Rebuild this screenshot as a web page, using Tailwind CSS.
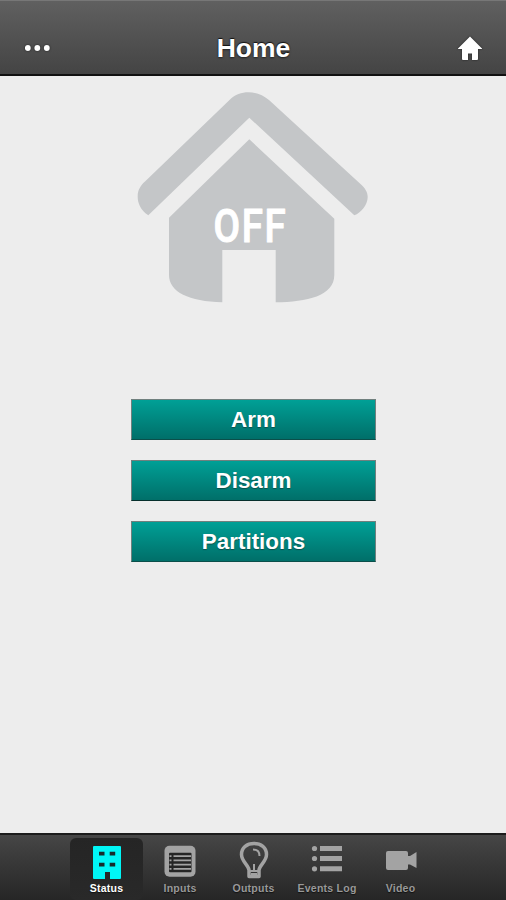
<!DOCTYPE html>
<html lang="en">
<head>
  <meta charset="UTF-8" />
  <meta name="viewport" content="width=device-width, initial-scale=1" />
  <title>Home</title>
  <script src="https://cdn.jsdelivr.net/npm/@tailwindcss/browser@4"></script>
</head>
<body class="h-screen flex flex-col overflow-hidden bg-[#ededed] font-['Liberation_Sans',Arial,sans-serif]">
  <!-- Top bar -->
  <header class="h-[76px] shrink-0 flex items-center justify-between pt-5 pl-[25px] pr-6 border-t border-t-[#777] border-b-2 border-b-[#111] bg-linear-to-b from-[#606060] to-[#444]">
    <button aria-label="Menu" class="w-[50px]">
      <svg class="w-[26px] h-[8px] drop-shadow-[0_0_1px_#222]" viewBox="0 0 26 8" fill="#fff">
        <circle cx="2.8" cy="4" r="2.9" /><circle cx="12.3" cy="4" r="2.9" /><circle cx="21.8" cy="4" r="2.9" />
      </svg>
    </button>
    <h1 class="pt-[2px] text-[26.5px] leading-none font-bold text-white [text-shadow:0_-1px_1px_#111,0_1px_2px_#222]">Home</h1>
    <button aria-label="Home" class="w-[50px] flex justify-end">
      <svg class="w-[24px] h-[24px] drop-shadow-[0_0_1px_#222]" viewBox="0 0 24 24" fill="#fff">
        <path d="M12 0.5L24 12.5V13H20V23Q20 24 19 24H14V17.5H10V24H5Q4 24 4 23V13H0V12.5Z" />
      </svg>
    </button>
  </header>

  <main class="flex-1 flex flex-col items-center">
    <!-- Alarm state -->
    <svg class="mt-4 mr-[2px] w-[231px] h-[211px] shrink-0" viewBox="0 0 231 211" fill="#c4c6c8">
      <path d="M11.3 123.3C3 118 .5 110 .7 104.5C.5 98 4 93 8 89.5L93 7.5C103 -2.3 120 -2.3 132 8L223.5 92C228 96 230.7 100 230.7 105C230.5 113 224 121 217.3 123.3L112.3 25.7Z" />
      <path d="M112.3 47.3L197.3 126.7V183C197.3 204 170 210 138.7 210.3V158H85.3V210.3C52 209.5 32 200 32 183V125.7Z" />
      <text transform="translate(76.5 149.5) scale(.82 1)" fill="#fff" stroke="#fff" stroke-width="1" stroke-linejoin="round" font-family="Roboto, sans-serif" font-size="47" font-weight="500" letter-spacing="2">OFF</text>
    </svg>

    <!-- Actions -->
    <div class="mt-24 w-[245px] flex flex-col gap-5 text-[22.4px] font-bold text-white">
      <button class="h-[41px] leading-[38px] pl-px border border-[#70807e] border-b-[#0b4f4a] bg-linear-to-b from-[#00a096] to-[#006f69] [text-shadow:0_1px_1px_#0b4f4a]">Arm</button>
      <button class="h-[41px] leading-[38px] pl-px border border-[#70807e] border-b-[#062f2c] bg-linear-to-b from-[#00a096] to-[#006f69] [text-shadow:0_1px_1px_#0b4f4a]">Disarm</button>
      <button class="h-[41px] leading-[38px] pl-px border border-[#70807e] border-b-[#0b4f4a] bg-linear-to-b from-[#00a096] to-[#006f69] [text-shadow:0_1px_1px_#0b4f4a]">Partitions</button>
    </div>
  </main>

  <!-- Tab bar -->
  <nav class="h-[67px] shrink-0 flex justify-center pt-[3px] pl-px border-t-2 border-[#1c1c1c] bg-linear-to-b from-[#464646] to-[#262626] text-[10.5px] leading-3 tracking-[0.25px] font-bold text-[#999] [text-shadow:0_1px_1px_#111]">
    <a class="w-[73.5px] flex flex-col items-center rounded-md bg-linear-to-b from-[#252525] to-[#292929] text-white">
      <svg class="mt-[6px] w-[36px] h-[36px]" viewBox="0 0 36 36">
        <path fill="#00f6f6" d="M5 2H31Q32 2 32 3V34Q32 35 31 35H21V28H16V35H5Q4 35 4 34V3Q4 2 5 2Z" />
        <path fill="#172b2b" d="M10 7.800h5.500v3.600H10zM20.700 7.800h5.500v3.600H20.700zM10 18.800h5.500v3.600H10zM20.700 18.800h5.500v3.600H20.700z" />
      </svg>
      <span class="mt-[2px]">Status</span>
    </a>
    <a class="w-[73.5px] flex flex-col items-center">
      <svg class="mt-[6px] w-[36px] h-[36px]" viewBox="0 0 36 36">
        <rect x="2.500" y="1.800" width="31" height="31" rx="5" fill="#a3a3a3" />
        <rect x="7" y="8.800" width="22.500" height="19.500" rx="1" fill="#252525" />
        <path stroke="#a3a3a3" stroke-width="1.700" d="M11.500 12.200H29M11.500 16.400H29M11.500 20.600H29M11.500 24.800H29M7.500 12.200h2M7.500 16.400h2M7.500 20.600h2M7.500 24.800h2" />
      </svg>
      <span class="mt-[2px]">Inputs</span>
    </a>
    <a class="w-[73.5px] flex flex-col items-center">
      <svg class="mt-[2px] w-[36px] h-[40px]" viewBox="0 0 36 40" fill="none" stroke="#a3a3a3">
        <path stroke-width="3.500" stroke-linejoin="round" d="M13 36.500V30C12.500 25 5.500 21.500 5.500 14.500C5.500 7.500 11 3.500 18 3.500S30.500 7.500 30.500 14.500C30.500 21.500 23.500 25 23 30V36.500Z" />
        <path stroke-width="2" d="M17 9.500C21 9.500 23.500 12 23.500 16M18 24V30M13 31H23M15 34H21" />
      </svg>
      <span class="mt-[2px]">Outputs</span>
    </a>
    <a class="w-[73.5px] flex flex-col items-center">
      <svg class="mt-[6px] w-[36px] h-[36px]" viewBox="0 0 36 36" fill="#a3a3a3">
        <circle cx="5.500" cy="4.500" r="2.600" /><circle cx="5.500" cy="14.500" r="2.600" /><circle cx="5.500" cy="24.800" r="2.600" />
        <path d="M11 2h22v5H11zM11 12h22v5H11zM11 22.300h22v5H11z" />
      </svg>
      <span class="mt-[2px] whitespace-nowrap">Events Log</span>
    </a>
    <a class="w-[73.5px] flex flex-col items-center">
      <svg class="mt-[6px] w-[36px] h-[36px]" viewBox="0 0 36 36" fill="#a3a3a3">
        <path d="M5 7H23Q25 7 25 9V12H27L33.500 8V24L27 20.500H25V24Q25 26 23 26H5Q3 26 3 24V9Q3 7 5 7Z" />
      </svg>
      <span class="mt-[2px]">Video</span>
    </a>
  </nav>
</body>
</html>
